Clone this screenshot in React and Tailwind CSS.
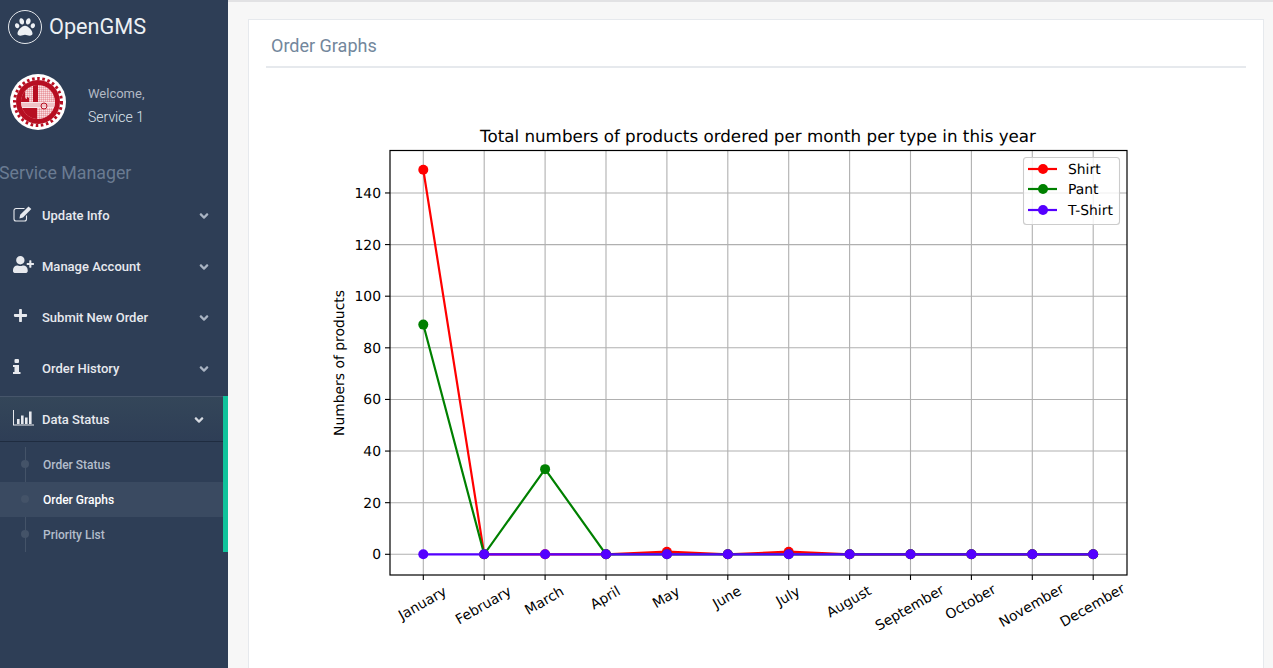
import { FaPaw, FaUserPlus, FaPlus, FaAngleDown } from "react-icons/fa";

const months = [
  ["January", 52], ["February", 60], ["March", 41], ["April", 30], ["May", 28], ["June", 28],
  ["July", 24], ["August", 45], ["September", 70], ["October", 47], ["November", 60], ["December", 60],
];
const yTicks = [0, 20, 40, 60, 80, 100, 120, 140];
const legendY = [169, 189, 210];

const series = [
  { name: "Shirt", color: "#ff0000", data: [149, 0, 0, 0, 1, 0, 1, 0, 0, 0, 0, 0] },
  { name: "Pant", color: "#008000", data: [89, 0, 33, 0, 0, 0, 0, 0, 0, 0, 0, 0] },
  { name: "T-Shirt", color: "#5500ff", data: [0, 0, 0, 0, 0, 0, 0, 0, 0, 0, 0, 0] },
];

const xAt = (i) => 423.3 + i * 60.9;
const yAt = (v) => 554.3 - v * 2.581;

const ChartIcon = () => (
  <svg width="21" height="16" viewBox="0 0 21 16" fill="currentColor">
    <path d="M0 0h1v14.6h20.4v1H0z" />
    <path d="M4 9h2.6v5H4zM8 5.5h2.6V14H8zM12 7.5h2.6V14H12zM16 1.5h2.6V14H16z" />
  </svg>
);

const EditIcon = () => (
  <svg width="19" height="16" viewBox="0 0 19 16" fill="none">
    <path d="M11.5 2.5H3A2 2 0 0 0 1 4.500V13a2 2 0 0 0 2 2h8.500a2 2 0 0 0 2-2V9.500" stroke="currentColor" strokeWidth="1.1" />
    <path d="M15.500 0.500l2.800 2.600-8.300 8.400-3.600 1 .8-3.700z" fill="currentColor" />
  </svg>
);

const InfoIcon = () => (
  <svg width="8" height="15" viewBox="0 0 8 15" fill="currentColor">
    <rect x="1.500" y="0" width="4.500" height="4" rx="1" />
    <path d="M0 6h6v7h1.500v2H0v-2h1.500V8H0z" />
  </svg>
);

const Logo = () => (
  <svg width="58" height="58" viewBox="0 0 58 58">
    <defs>
      <pattern id="hatch" width="2" height="2" patternUnits="userSpaceOnUse">
        <rect width="2" height="2" fill="#f9dfe2" />
        <path d="M0 0h2M0 0v2" stroke="#d23a48" strokeWidth="0.5" />
      </pattern>
      <clipPath id="inner">
        <circle cx="29" cy="29" r="17" />
      </clipPath>
    </defs>
    <circle cx="29" cy="29" r="28" fill="#fff" />
    <circle cx="29" cy="29" r="22" fill="#b70f22" />
    <circle cx="29" cy="29" r="23.500" fill="none" stroke="#b70f22" strokeWidth="3" strokeDasharray="2.6 2.6" />
    <g clipPath="url(#inner)">
      <rect x="12" y="12" width="34" height="34" fill="url(#hatch)" />
      <path d="M12 29V19h4v6l2 1v-2l2 1v4zM24 29V12h5v17z" fill="#b70f22" />
      <rect x="12" y="35" width="16" height="12" fill="#b70f22" />
      <rect x="12" y="29" width="34" height="6" fill="#f8e5e7" />
      <path d="M12 31h34M12 33h34" stroke="#d23a48" strokeWidth="0.4" />
    </g>
    <circle cx="35" cy="33" r="3" fill="none" stroke="#b70f22" strokeWidth="1" />
  </svg>
);

const MenuItem = ({ icon, label }) => (
  <div className="flex h-[51px] items-center text-[#e7e9ee]">
    <span className="flex w-[42px] -translate-y-0.5 justify-start pl-[13px]">{icon}</span>
    <span className="flex-1 text-[13px] font-medium">{label}</span>
    <FaAngleDown className="mr-[17px] text-[14px] text-[#aab4c3]" />
  </div>
);

const SubItem = ({ label, active }) => (
  <div className={`relative flex h-[35px] items-center pl-[43px] text-[12px] font-medium ${active ? "bg-[#3a4a61] text-white" : "text-[#b3bdcb]"}`}>
    <span className="absolute left-[21px] top-[13px] h-2 w-2 rounded-full bg-[#445368]" />
    {label}
  </div>
);

const Sidebar = () => (
  <aside className="flex w-[228px] shrink-0 flex-col bg-[#2e3e56]">
    <div className="flex items-center gap-[7px] pl-2 pt-[10px]">
      <span className="flex h-[34px] w-[34px] items-center justify-center rounded-full border border-[#e5e8ec] text-[20px] text-[#eef1f5]">
        <FaPaw />
      </span>
      <span className="text-[21.7px] leading-[34px] text-[#ecf0f4]">OpenGMS</span>
    </div>
    <div className="mt-[29px] flex items-center pl-[9px]">
      <Logo />
      <div className="ml-[21px] flex flex-col pt-[7px]">
        <span className="text-[13px] leading-5 text-[#b2b8c3]">Welcome,</span>
        <span className="mt-[3px] text-[14px] font-light leading-5 text-[#dfe5ec]">Service 1</span>
      </div>
    </div>
    <div className="mt-[28px] -ml-px text-[17.8px] leading-[28px] text-[#6a7b92]">Service Manager</div>
    <nav className="mt-[3px]">
      <MenuItem icon={<EditIcon />} label="Update Info" />
      <MenuItem icon={<FaUserPlus className="text-[21px]" />} label="Manage Account" />
      <MenuItem icon={<FaPlus className="text-[15px]" />} label="Submit New Order" />
      <MenuItem icon={<InfoIcon />} label="Order History" />
      <div className="mt-[2px] border-r-[5px] border-[#10c39b]">
        <div className="flex h-[46px] items-center border-y border-y-[#1f2c40] border-t-[#46556a] bg-gradient-to-b from-[#344659] to-[#2e3e56] pt-px text-[#e7e9ee]">
          <span className="w-[42px] -translate-y-0.5 pl-[13px]"><ChartIcon /></span>
          <span className="flex-1 text-[13px] font-medium">Data Status</span>
          <FaAngleDown className="mr-[17px] text-[14px] text-[#d5dae1]" />
        </div>
        <div className="relative pt-[5px]">
          <span className="absolute bottom-0 left-[25px] top-[5px] w-px bg-[#445368]" />
          <SubItem label="Order Status" />
          <SubItem label="Order Graphs" active />
          <SubItem label="Priority List" />
        </div>
      </div>
    </nav>
  </aside>
);

const OrderChart = () => (
  <svg
    width="880"
    height="540"
    viewBox="316 90 880 540"
    className="mx-auto block"
    textRendering="geometricPrecision"
    style={{ fontFamily: "'DejaVu Sans', sans-serif" }}
  >
    <text x="758" y="142" textAnchor="middle" fontSize="16.73" fill="#000">
      Total numbers of products ordered per month per type in this year
    </text>
    {months.map(([m], i) => (
      <line key={m} x1={xAt(i)} x2={xAt(i)} y1="150" y2="575" stroke="#b0b0b0" strokeWidth="1.1" />
    ))}
    {yTicks.map((v) => (
      <g key={v}>
        <line x1="390" x2="1127" y1={yAt(v)} y2={yAt(v)} stroke="#b0b0b0" strokeWidth="1.1" />
        <line x1="385" x2="390" y1={yAt(v)} y2={yAt(v)} stroke="#000" strokeWidth="1.1" />
        <text x="381" y={yAt(v) + 5} textAnchor="end" fontSize="13.9" fill="#000">{v}</text>
      </g>
    ))}
    {series.map((s) => (
      <g key={s.name}>
        <polyline
          points={s.data.map((v, i) => `${xAt(i)},${yAt(v)}`).join(" ")}
          fill="none"
          stroke={s.color}
          strokeWidth="2.2"
        />
        {s.data.map((v, i) => (
          <circle key={i} cx={xAt(i)} cy={yAt(v)} r="5" fill={s.color} />
        ))}
      </g>
    ))}
    <rect x="390" y="150.500" width="737" height="424.500" fill="none" stroke="#000" strokeWidth="1.2" />
    {months.map(([m, w], i) => {
      const cy = 590 + w / 4;
      const cx = xAt(i) - 1;
      return (
        <g key={m}>
          <line x1={xAt(i)} x2={xAt(i)} y1="575" y2="580" stroke="#000" strokeWidth="1.1" />
          <text
            x={cx}
            y={cy + 5}
            textAnchor="middle"
            fontSize="13.9"
            fill="#000"
            transform={`rotate(-30 ${cx} ${cy})`}
          >
            {m}
          </text>
        </g>
      );
    })}
    <text x="344" y="363" textAnchor="middle" fontSize="13.9" fill="#000" transform="rotate(-90 344 363)">
      Numbers of products
    </text>
    <rect x="1023.500" y="157.500" width="96" height="67" rx="3" fill="#fff" fillOpacity="0.8" stroke="#cccccc" strokeWidth="1.1" />
    {series.map((s, i) => (
      <g key={s.name}>
        <line x1="1028" x2="1057" y1={legendY[i]} y2={legendY[i]} stroke={s.color} strokeWidth="2.2" />
        <circle cx="1043" cy={legendY[i]} r="5" fill={s.color} />
        <text x="1068" y={legendY[i] + 5} fontSize="13.9" fill="#000">{s.name}</text>
      </g>
    ))}
  </svg>
);

export default function App() {
  return (
    <div className="flex h-screen overflow-hidden bg-[#f7f7f7] font-['Roboto',sans-serif]">
      <Sidebar />
      <main className="flex-1 border-t-2 border-[#e2e2e4] pl-[20px] pr-[9px] pt-[17px]">
        <div className="h-[700px] border border-[#e6e9ed] bg-white pl-[17px] pr-[17px]">
          <div className="border-b-2 border-[#e6e9ed] pl-[5px] pt-[13px] pb-[8px] text-[18px] leading-[25px] text-[#73879c]">
            Order Graphs
          </div>
          <div className="-mx-[17px] pt-[22px]">
            <OrderChart />
          </div>
        </div>
      </main>
    </div>
  );
}
